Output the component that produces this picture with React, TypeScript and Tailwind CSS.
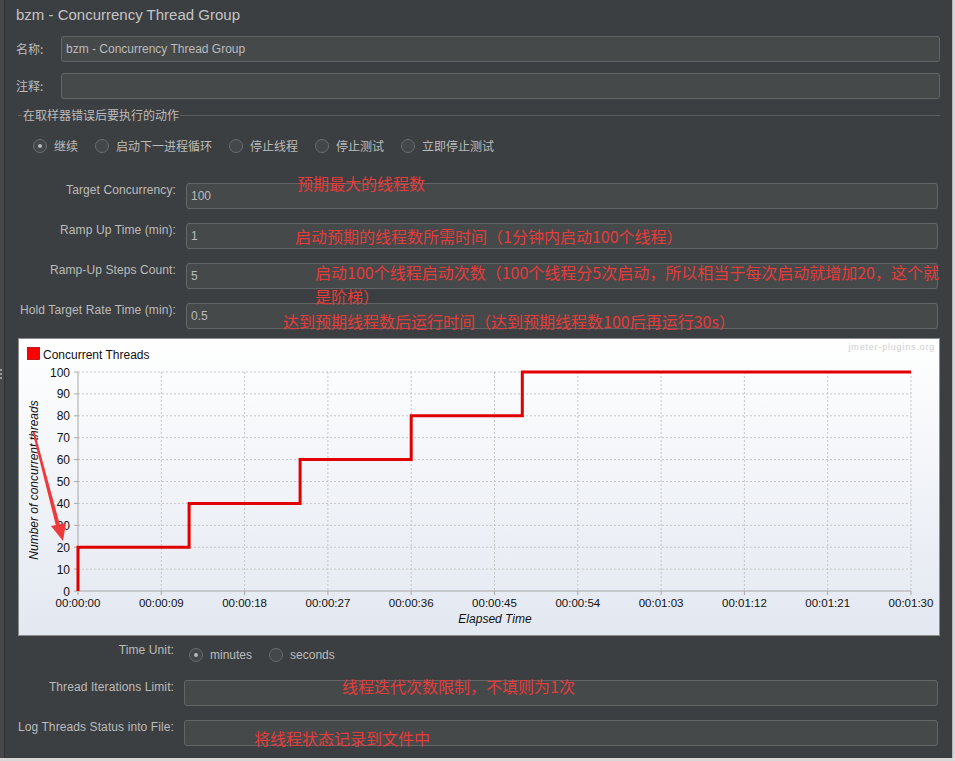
import React from "react";

const SANS = "font-['Liberation_Sans','Noto_Sans_CJK_SC',sans-serif]";
const CJK = "font-['Noto_Sans_CJK_SC','Liberation_Sans',sans-serif]";

function Radio({ checked, label }: { checked?: boolean; label: string }) {
  return (
    <div className="flex items-center gap-[7px]">
      <div className="w-[14px] h-[14px] rounded-full border border-[#6a6c6e] bg-[#43474a] flex items-center justify-center">
        {checked && <div className="w-[4px] h-[4px] rounded-full bg-[#b8b8b8]" />}
      </div>
      <span className="text-[12px] text-[#bbbbbb] leading-[16px]">{label}</span>
    </div>
  );
}

function Input({ value }: { value?: string }) {
  return (
    <div className="flex-1 h-[26px] rounded-[3px] border border-[#646566] bg-[#45494a] flex items-center pl-[4px] text-[12px] text-[#bbbbbb]">
      {value}
    </div>
  );
}

function Field({ label, value, w }: { label: string; value?: string; w: string }) {
  return (
    <div className="flex items-start mr-[2px]">
      <div className={`${w} text-right text-[12px] leading-[14px] tracking-[0.1px] text-[#bbbbbb] pr-[1px] whitespace-nowrap`}>{label}</div>
      <div className="w-[9px]" />
      <Input value={value} />
    </div>
  );
}

const X0 = 59;
const X1 = 892;
const Y0 = 252;
const px = (s: number) => X0 + (s * (X1 - X0)) / 90;
const py = (v: number) => Y0 - v * 2.19;

function Chart() {
  const steps: [number, number][] = [
    [0, 0], [0, 20], [12, 20], [12, 40], [24, 40], [24, 60], [36, 60], [36, 80], [48, 80], [48, 100], [90, 100],
  ];
  const pts = steps.map(([s, v]) => `${px(s).toFixed(1)},${py(v).toFixed(1)}`).join(" ");
  const xLabels = ["00:00:00", "00:00:09", "00:00:18", "00:00:27", "00:00:36", "00:00:45", "00:00:54", "00:01:03", "00:01:12", "00:01:21", "00:01:30"];
  return (
    <div className="relative ml-[2px] h-[298px] border border-[#8c8c8c] bg-gradient-to-b from-[#ffffff] to-[#e3e8f1]">
      <svg className="absolute inset-0" width="920" height="296" viewBox="0 0 920 296" fontFamily="'Liberation Sans', Arial, sans-serif">
        {Array.from({ length: 10 }, (_, i) => (
          <line key={`h${i}`} x1={X0} x2={X1} y1={py((i + 1) * 10)} y2={py((i + 1) * 10)} stroke="#c6c6c6" strokeWidth="1" strokeDasharray="2 2" />
        ))}
        {Array.from({ length: 10 }, (_, i) => (
          <line key={`v${i}`} x1={px((i + 1) * 9)} x2={px((i + 1) * 9)} y1={py(100)} y2={Y0} stroke="#c6c6c6" strokeWidth="1" strokeDasharray="2 2" />
        ))}
        <line x1={X0} x2={X0} y1={py(100)} y2={Y0} stroke="#a8a8a8" strokeWidth="1" />
        <line x1={X0} x2={X1} y1={Y0} y2={Y0} stroke="#a8a8a8" strokeWidth="1" />
        {Array.from({ length: 11 }, (_, i) => (
          <line key={`yt${i}`} x1={X0 - 4} x2={X0} y1={py(i * 10)} y2={py(i * 10)} stroke="#a8a8a8" strokeWidth="1" />
        ))}
        {xLabels.map((_, i) => (
          <line key={`xt${i}`} x1={px(i * 9)} x2={px(i * 9)} y1={Y0} y2={Y0 + 4} stroke="#a8a8a8" strokeWidth="1" />
        ))}
        {Array.from({ length: 11 }, (_, i) => (
          <text key={`yl${i}`} x={51} y={py(i * 10) + 4.5} textAnchor="end" fontSize="12" fill="#111">
            {i * 10}
          </text>
        ))}
        {xLabels.map((t, i) => (
          <text key={`xl${i}`} x={px(i * 9)} y={268} textAnchor="middle" fontSize="11.5" fill="#111">
            {t}
          </text>
        ))}
        <text x={476} y={284} textAnchor="middle" fontSize="12" fontStyle="italic" fill="#111">
          Elapsed Time
        </text>
        <text x={15} y={141} dy="4" textAnchor="middle" fontSize="12" fontStyle="italic" fill="#111" transform="rotate(-90 15 141)">
          Number of concurrent threads
        </text>
        <rect x="8.5" y="8.5" width="12" height="12" fill="#ff0000" stroke="#b00000" strokeWidth="0.8" />
        <text x="24" y="20" fontSize="12" fill="#111">Concurrent Threads</text>
        <text x="916" y="11" textAnchor="end" fontSize="9" fill="#cfcfcf" letterSpacing="0.8">
          jmeter-plugins.org
        </text>
        <polyline points={pts} fill="none" stroke="#e00000" strokeWidth="3" strokeLinejoin="miter" />
        <polygon points="13.5,93 15.5,92.5 41.5,188 37.5,189" fill="#ee3a3a" />
        <polygon points="32,187 47,184 44,202" fill="#ee3a3a" />
      </svg>
    </div>
  );
}

export default function App() {
  return (
    <div className={`relative w-[955px] h-[761px] bg-[#d8d8d8] overflow-hidden ${SANS}`}>
      <div className="flex h-[758px]">
        <div className="w-[5px] bg-[#46484a] border-r border-[#2f3133] flex flex-col items-start pt-[369px] gap-[2px]">
          <div className="w-[2px] h-[2px] bg-[#9a9a9a]" />
          <div className="w-[2px] h-[2px] bg-[#9a9a9a]" />
          <div className="w-[2px] h-[2px] bg-[#9a9a9a]" />
        </div>
        <div className="w-[947px] bg-[#3c3f41] pl-[11px] pr-[12px] flex flex-col">
          <div className="h-[30px] pt-[1px] flex items-center text-[15px] text-[#c4c4c4]">bzm - Concurrency Thread Group</div>

          <div className="mt-[6px] flex items-center">
            <div className={`w-[45px] text-[12px] text-[#bbbbbb] ${CJK}`}>名称:</div>
            <Input value="bzm - Concurrency Thread Group" />
          </div>
          <div className="mt-[11px] flex items-center">
            <div className={`w-[45px] text-[12px] text-[#bbbbbb] ${CJK}`}>注释:</div>
            <Input />
          </div>

          <div className="mt-[9px] h-[14px] ml-[2px] flex items-center">
            <div className="w-[4px] h-px bg-[#5a5d5f]" />
            <span className={`px-[1px] text-[12px] text-[#bbbbbb] leading-[14px] ${CJK}`}>在取样器错误后要执行的动作</span>
            <div className="flex-1 h-px bg-[#5a5d5f]" />
          </div>

          <div className={`mt-[14px] h-[20px] ml-[17px] flex items-center gap-[17px] ${CJK}`}>
            <Radio checked label="继续" />
            <Radio label="启动下一进程循环" />
            <Radio label="停止线程" />
            <Radio label="停止测试" />
            <Radio label="立即停止测试" />
          </div>

          <div className="mt-[27px] flex flex-col gap-[14px]">
            <Field w="w-[161px]" label="Target Concurrency:" value="100" />
            <Field w="w-[161px]" label="Ramp Up Time (min):" value="1" />
            <Field w="w-[161px]" label="Ramp-Up Steps Count:" value="5" />
            <Field w="w-[161px]" label="Hold Target Rate Time (min):" value="0.5" />
          </div>

          <div className="mt-[9px]">
            <Chart />
          </div>

          <div className="mt-[4px] h-[24px] flex items-start">
            <div className="w-[159px] text-right text-[12px] leading-[20px] tracking-[0.1px] text-[#bbbbbb] pr-[1px]">Time Unit:</div>
            <div className="ml-[14px] mt-[7px] flex items-center gap-[17px]">
              <Radio checked label="minutes" />
              <Radio label="seconds" />
            </div>
          </div>

          <div className="mt-[16px] flex flex-col gap-[14px]">
            <Field w="w-[159px]" label="Thread Iterations Limit:" />
            <Field w="w-[159px]" label="Log Threads Status into File:" />
          </div>
        </div>
        <div className="flex-1 bg-[#d4d4d4] border-l border-[#b8b8b8]" />
      </div>

      <div className={`absolute left-[297px] top-[173px] text-[16px] leading-[20px] text-[#e63b3b] whitespace-nowrap ${CJK}`}>预期最大的线程数</div>
      <div className={`absolute left-[295px] top-[226px] text-[16px] leading-[20px] text-[#e63b3b] whitespace-nowrap ${CJK}`}>启动预期的线程数所需时间（1分钟内启动100个线程）</div>
      <div className={`absolute left-[315px] top-[260px] text-[16px] leading-[24px] text-[#e63b3b] whitespace-nowrap ${CJK}`}>
        <div>启动100个线程启动次数（100个线程分5次启动，所以相当于每次启动就增加20，这个就</div>
        <div>是阶梯）</div>
      </div>
      <div className={`absolute left-[283px] top-[311px] text-[16px] leading-[20px] text-[#e63b3b] whitespace-nowrap ${CJK}`}>达到预期线程数后运行时间（达到预期线程数100后再运行30s）</div>
      <div className={`absolute left-[342px] top-[676px] text-[16px] leading-[20px] text-[#e63b3b] whitespace-nowrap ${CJK}`}>线程迭代次数限制，不填则为1次</div>
      <div className={`absolute left-[254px] top-[728px] text-[16px] leading-[20px] text-[#e63b3b] whitespace-nowrap ${CJK}`}>将线程状态记录到文件中</div>
    </div>
  );
}
